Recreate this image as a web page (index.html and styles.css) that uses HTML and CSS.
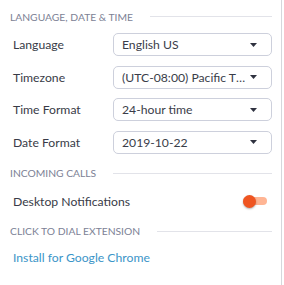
FILE: index.html
```html
<!DOCTYPE html>
<html lang="en">
<head>
    <meta charset="utf-8">
    <meta name="viewport" content="width=device-width, initial-scale=1.0">
    <title>Settings</title>
    <link rel="stylesheet" href="styles.css">
</head>

<body>
    <div class="panel">
        <h2 class="section-title">Language, Date &amp; Time</h2>
        <div class="settings">
            <label class="setting-label">Language</label>
            <div class="select">
                <span class="select-value">English US</span>
                <svg class="arrow" width="7" height="4" viewBox="0 0 7 4"><path d="M0 0h7L3.5 4z"/></svg>
            </div>

            <label class="setting-label">Timezone</label>
            <div class="select">
                <span class="select-value">(UTC-08:00) Pacific Time (US &amp; Canada)</span>
                <svg class="arrow" width="7" height="4" viewBox="0 0 7 4"><path d="M0 0h7L3.5 4z"/></svg>
            </div>

            <label class="setting-label">Time Format</label>
            <div class="select">
                <span class="select-value">24-hour time</span>
                <svg class="arrow" width="7" height="4" viewBox="0 0 7 4"><path d="M0 0h7L3.5 4z"/></svg>
            </div>

            <label class="setting-label">Date Format</label>
            <div class="select">
                <span class="select-value">2019-10-22</span>
                <svg class="arrow" width="7" height="4" viewBox="0 0 7 4"><path d="M0 0h7L3.5 4z"/></svg>
            </div>
        </div>

        <h2 class="section-title incoming">Incoming Calls</h2>
        <div class="toggle-row">
            <span class="setting-label">Desktop Notifications</span>
            <span class="toggle">
                <span class="toggle-knob"></span>
            </span>
        </div>

        <h2 class="section-title dial">Click to dial extension</h2>
        <a class="install-link" href="#">Install for Google Chrome</a>
    </div>
</body>
</html>
```

FILE: styles.css
```css
body {
    margin: 0;
    background-color: #fff;
    font-family: Lato, "Open Sans", sans-serif;
}

.panel {
    box-sizing: border-box;
    width: 282px;
    min-height: 285px;
    padding: 8px 9px 0 10px;
    border-right: 1px solid #d6d7dc;
}

.section-title {
    display: flex;
    align-items: center;
    gap: 17px;
    height: 17px;
    margin: 0;
    font-size: 10.3px;
    font-weight: normal;
    text-transform: uppercase;
    color: #7c8195;
}

.section-title::after {
    content: "";
    flex: 1;
    height: 1px;
    background-color: #e2e3e9;
}

.settings {
    display: grid;
    grid-template-columns: 103px 1fr;
    grid-auto-rows: 23px;
    row-gap: 9.5px;
    align-items: center;
    margin-top: 8px;
}

.setting-label {
    padding-left: 3px;
    font-size: 12.2px;
    color: #383b47;
}

.select {
    display: flex;
    align-items: center;
    box-sizing: border-box;
    height: 23px;
    padding: 0 14px 0 8px;
    border: 1px solid #cdd0dc;
    border-radius: 5px;
    font-size: 12.2px;
    color: #3a3d49;
    min-width: 0;
}

.select-value {
    flex: 1;
    min-width: 0;
    white-space: nowrap;
    overflow: hidden;
    text-overflow: ellipsis;
}

.arrow {
    flex: none;
    margin-left: 3px;
    fill: #2f3240;
}

.incoming {
    margin-top: 11px;
}

.toggle-row {
    display: flex;
    align-items: center;
    justify-content: space-between;
    height: 20px;
    margin-top: 9.5px;
    padding-right: 5px;
}

.toggle {
    display: flex;
    align-items: center;
    width: 24px;
    height: 8px;
    border-radius: 4px;
    background-color: #ffb594;
}

.toggle-knob {
    width: 13px;
    height: 13px;
    border-radius: 50%;
    background-color: #ef5521;
    box-shadow: 0 1px 2px rgba(0, 0, 0, 0.3);
}

.dial {
    margin-top: 11.5px;
}

.install-link {
    display: block;
    margin-top: 9.5px;
    padding-left: 3px;
    line-height: 18px;
    font-size: 12.2px;
    color: #3b95c8;
    text-decoration: none;
}
```
